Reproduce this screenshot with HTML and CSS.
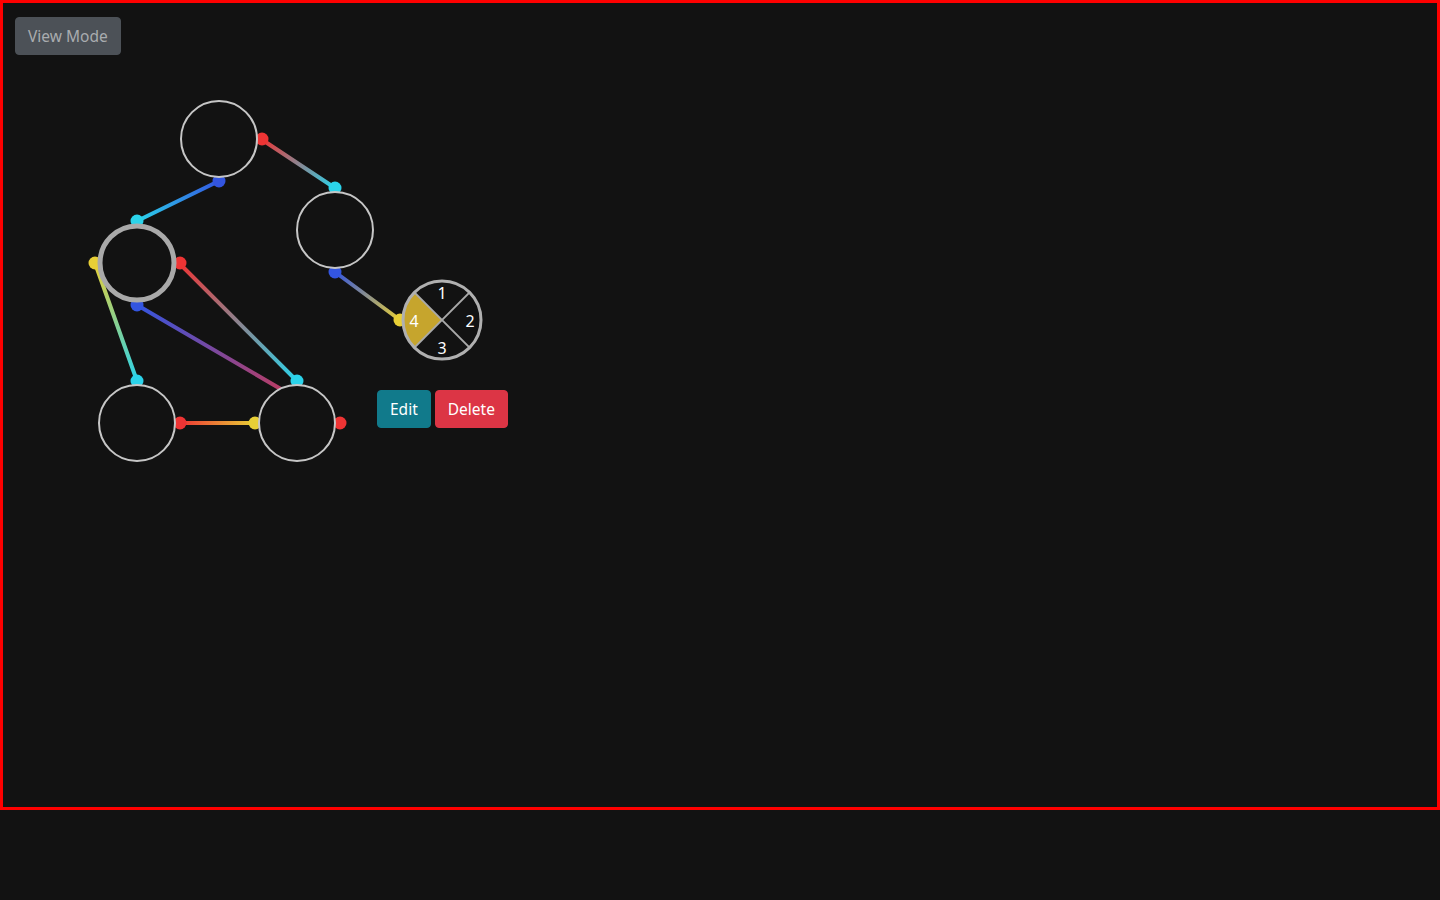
FILE: index.html
```html
<!DOCTYPE html>
<html lang="en">
<head>
<meta charset="utf-8">
<title>Graph Editor</title>
<link rel="stylesheet" href="styles.css">
</head>
<body>
<div class="board">
  <button class="btn btn-mode" type="button" disabled>View Mode</button>
  <svg class="graph" viewBox="3 3 1434 804" xmlns="http://www.w3.org/2000/svg">
    <defs>
      <linearGradient id="g1" gradientUnits="userSpaceOnUse" x1="219" y1="181" x2="137" y2="221"><stop offset="0" stop-color="#3355e0"/><stop offset="1" stop-color="#2bd3ea"/></linearGradient>
      <linearGradient id="g2" gradientUnits="userSpaceOnUse" x1="261" y1="139" x2="335" y2="188"><stop offset="0" stop-color="#ee3434"/><stop offset="1" stop-color="#2bd3ea"/></linearGradient>
      <linearGradient id="g3" gradientUnits="userSpaceOnUse" x1="335" y1="272" x2="400" y2="320"><stop offset="0" stop-color="#3355e0"/><stop offset="1" stop-color="#e8cf36"/></linearGradient>
      <linearGradient id="g4" gradientUnits="userSpaceOnUse" x1="95" y1="263" x2="137" y2="381"><stop offset="0" stop-color="#e8cf36"/><stop offset="1" stop-color="#2bd3ea"/></linearGradient>
      <linearGradient id="g5" gradientUnits="userSpaceOnUse" x1="179" y1="263" x2="297" y2="381"><stop offset="0" stop-color="#ee3434"/><stop offset="1" stop-color="#2bd3ea"/></linearGradient>
      <linearGradient id="g6" gradientUnits="userSpaceOnUse" x1="137" y1="305" x2="339" y2="423"><stop offset="0" stop-color="#3355e0"/><stop offset="1" stop-color="#ee3434"/></linearGradient>
      <linearGradient id="g7" gradientUnits="userSpaceOnUse" x1="179" y1="423" x2="255" y2="423"><stop offset="0" stop-color="#ee3434"/><stop offset="1" stop-color="#e8cf36"/></linearGradient>
    </defs>

    <g class="edges">
      <line x1="219" y1="181" x2="137" y2="221" stroke="url(#g1)"/>
      <line x1="261" y1="139" x2="335" y2="188" stroke="url(#g2)"/>
      <line x1="335" y1="272" x2="400" y2="320" stroke="url(#g3)"/>
      <line x1="95" y1="263" x2="137" y2="381" stroke="url(#g4)"/>
      <line x1="179" y1="263" x2="297" y2="381" stroke="url(#g5)"/>
      <line x1="137" y1="305" x2="339" y2="423" stroke="url(#g6)"/>
      <line x1="179" y1="423" x2="255" y2="423" stroke="url(#g7)"/>
    </g>

    <g class="ports">
      <circle class="p-blue" cx="219" cy="181" r="6.5"/>
      <circle class="p-red" cx="262" cy="139" r="6.5"/>
      <circle class="p-cyan" cx="335" cy="188" r="6.5"/>
      <circle class="p-blue" cx="335" cy="272" r="6.5"/>
      <circle class="p-cyan" cx="137" cy="221" r="6.5"/>
      <circle class="p-yellow" cx="95" cy="263" r="6.5"/>
      <circle class="p-red" cx="180" cy="263" r="6.5"/>
      <circle class="p-blue" cx="137" cy="305" r="6.5"/>
      <circle class="p-cyan" cx="137" cy="381" r="6.5"/>
      <circle class="p-red" cx="180" cy="423" r="6.5"/>
      <circle class="p-cyan" cx="297" cy="381" r="6.5"/>
      <circle class="p-yellow" cx="255" cy="423" r="6.5"/>
      <circle class="p-red" cx="340" cy="423" r="6.5"/>
      <circle class="p-yellow" cx="400" cy="320" r="6.5"/>
    </g>

    <g class="nodes">
      <circle class="node" cx="219" cy="139" r="38"/>
      <circle class="node" cx="335" cy="230" r="38"/>
      <circle class="node node-selected" cx="137" cy="263" r="37"/>
      <circle class="node" cx="137" cy="423" r="38"/>
      <circle class="node" cx="297" cy="423" r="38"/>
    </g>

    <g class="pie">
      <circle class="pie-bg" cx="442" cy="320" r="39"/>
      <path class="pie-active" d="M442 320 L414.4 292.4 A39 39 0 0 0 414.4 347.6 Z"/>
      <line class="pie-div" x1="414.4" y1="292.4" x2="469.6" y2="347.6"/>
      <line class="pie-div" x1="469.6" y1="292.4" x2="414.4" y2="347.6"/>
      <circle class="pie-ring" cx="442" cy="320" r="39"/>
      <text class="pie-label" x="442" y="293">1</text>
      <text class="pie-label" x="470" y="321">2</text>
      <text class="pie-label" x="442" y="348">3</text>
      <text class="pie-label" x="414" y="321">4</text>
    </g>
  </svg>

  <div class="context-menu">
    <button class="btn btn-edit" type="button">Edit</button>
    <button class="btn btn-delete" type="button">Delete</button>
  </div>
</div>
</body>
</html>
```

FILE: styles.css
```css
* { box-sizing: border-box; }

html, body {
  margin: 0;
  padding: 0;
  background: #121212;
}

body {
  font-family: "Noto Sans", "Open Sans", sans-serif;
  height: 900px;
  overflow: hidden;
}

.board {
  position: relative;
  width: 1440px;
  height: 810px;
  border: 3px solid #ff0000;
  background: #121212;
}

.graph {
  display: block;
  width: 1434px;
  height: 804px;
}

.edges line {
  stroke-width: 4;
  stroke-linecap: round;
}

.p-blue { fill: #3355e0; }
.p-red { fill: #ee3434; }
.p-cyan { fill: #2bd3ea; }
.p-yellow { fill: #e8cf36; }

.node {
  fill: #121212;
  stroke: #c6c6c6;
  stroke-width: 2;
}

.node-selected {
  stroke: #a9a9a9;
  stroke-width: 5;
}

.pie-bg { fill: #121212; }
.pie-active { fill: #c6a52d; }
.pie-div {
  stroke: #a9a9a9;
  stroke-width: 2;
}
.pie-ring {
  fill: none;
  stroke: #b0b0b0;
  stroke-width: 3;
}
.pie-label {
  fill: #ffffff;
  font-family: "Noto Sans", sans-serif;
  font-size: 16px;
  text-anchor: middle;
  dominant-baseline: central;
}

.btn {
  font-family: "Noto Sans", "Open Sans", sans-serif;
  font-size: 15.5px;
  line-height: 24px;
  padding: 6px 12px;
  border: 1px solid transparent;
  border-radius: 4px;
  color: #ffffff;
  cursor: pointer;
}

.btn-mode {
  position: absolute;
  top: 14px;
  left: 12px;
  height: 38px;
  background: #4c5157;
  color: #a9acaf;
  border-color: #4c5157;
}

.context-menu {
  position: absolute;
  top: 387px;
  left: 374px;
  display: flex;
  gap: 4px;
}

.btn-edit {
  height: 38px;
  background: #117a8b;
  border-color: #117a8b;
}

.btn-delete {
  height: 38px;
  background: #dc3545;
  border-color: #dc3545;
}
```
